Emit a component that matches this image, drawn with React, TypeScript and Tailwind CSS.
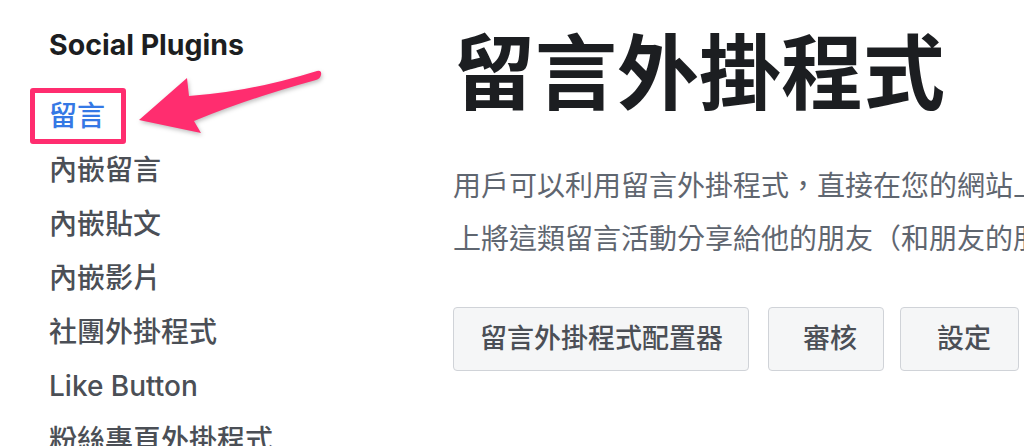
import React from "react";

const navItems = [
  "留言",
  "內嵌留言",
  "內嵌貼文",
  "內嵌影片",
  "社團外掛程式",
  "Like Button",
  "粉絲專頁外掛程式",
];

const font = { fontFamily: 'Inter, "Noto Sans CJK TC", "Noto Sans", sans-serif' };

export default function App() {
  return (
    <div
      className="relative flex h-[446px] w-[1024px] overflow-hidden bg-white"
      style={font}
    >
      {/* sidebar */}
      <aside className="w-[453px] shrink-0 pl-[49px] pt-[31px]">
        <h2 className="text-[28.5px] font-bold leading-[28px] text-[#1c1e21]">
          Social Plugins
        </h2>
        <ul className="mt-[30px]">
          {navItems.map((item, i) => (
            <li
              key={item}
              className={
                i === 0
                  ? "relative flex h-[54px] items-center text-[28px] font-medium text-[#3578e5]"
                  : "flex h-[54px] items-center text-[28px] font-medium text-[#4b4f56]"
              }
            >
              {item}
              {i === 0 && (
                <span className="absolute left-[-19px] top-[-1px] h-[56px] w-[96px] rounded-[3px] border-[5px] border-[#ff2d6f]" />
              )}
            </li>
          ))}
        </ul>
      </aside>

      {/* main */}
      <main className="min-w-0 flex-1 pt-[33px]">
        <h1 className="whitespace-nowrap text-[82px] font-bold leading-[82px] text-[#1c1e21]">
          留言外掛程式
        </h1>
        <p className="mt-[45px] whitespace-nowrap text-[28px] leading-[53px] text-[#5f6670]">
          <span className="block">用戶可以利用留言外掛程式，直接在您的網站上留言，也可以在 Facebook</span>
          <span className="block">上將這類留言活動分享給他的朋友（和朋友的朋友）。</span>
        </p>
        <div className="mt-[41px] flex whitespace-nowrap text-[27px] font-medium text-[#4b4f56]">
          <button className="flex h-[64px] items-center rounded-[4px] border border-[#d0d3d8] bg-[#f5f6f7] pl-[26px] pr-[25px]">
            留言外掛程式配置器
          </button>
          <button className="ml-[19px] flex h-[64px] items-center rounded-[4px] border border-[#d0d3d8] bg-[#f5f6f7] pl-[34px] pr-[26px]">
            審核
          </button>
          <button className="ml-[16px] flex h-[64px] items-center rounded-[4px] border border-[#d0d3d8] bg-[#f5f6f7] pl-[36px] pr-[27px]">
            設定
          </button>
        </div>
      </main>

      {/* annotation arrow */}
      <svg
        className="pointer-events-none absolute left-[130px] top-[60px] drop-shadow-[1px_2px_2px_rgba(0,0,0,0.25)]"
        width="200"
        height="90"
        viewBox="0 0 200 90"
      >
        <path
          d="M9 60 L57 18 L59 36 Q120 32 187 11 Q192 10 191 15 Q190 19 186 20 Q120 38 64 61 L71 73 Z"
          fill="#ff2d6f"
        />
      </svg>
    </div>
  );
}
